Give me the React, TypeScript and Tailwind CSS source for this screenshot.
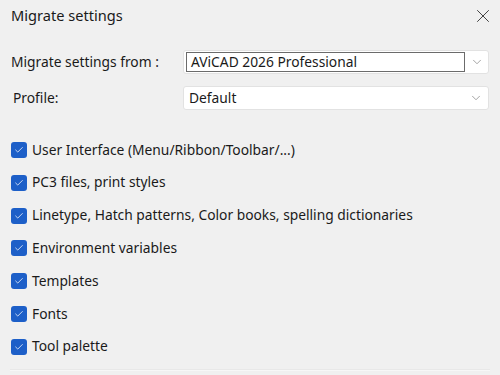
import { X, ChevronDown, Check } from 'lucide-react';

const items = [
  'User Interface (Menu/Ribbon/Toolbar/...)',
  'PC3 files, print styles',
  'Linetype, Hatch patterns, Color books, spelling dictionaries',
  'Environment variables',
  'Templates',
  'Fonts',
  'Tool palette',
];

export default function App() {
  return (
    <div
      className="w-[500px] h-[375px] overflow-hidden bg-[#f0f0f0] text-[#1a1a1a] flex flex-col"
      style={{ fontFamily: '"Noto Sans", "Open Sans", sans-serif' }}
    >
      {/* Title bar */}
      <div className="h-[31px] flex items-center justify-between pl-[11px] pr-[6px]">
        <span className="text-[14.6px] leading-none">Migrate settings</span>
        <X className="w-[22px] h-[22px] text-[#333]" strokeWidth={1} />
      </div>

      {/* Combos */}
      <div className="mt-[19px] flex items-center h-[24px]">
        <span className="w-[183px] pl-[11px] text-[13.8px]">Migrate settings from :</span>
        <div className="w-[306px] h-[24px] bg-white border border-[#e2e2e2] rounded-[3px] flex items-center pl-[2px]">
          <div className="w-[279px] h-[20px] border border-[#6b6b6b] flex items-center pl-[4px] text-[13.8px]">
            AViCAD 2026 Professional
          </div>
          <div className="flex-1 flex justify-center">
            <ChevronDown className="w-[14px] h-[14px] text-[#888]" strokeWidth={1.3} />
          </div>
        </div>
      </div>
      <div className="mt-[12px] flex items-center h-[24px]">
        <span className="w-[183px] pl-[13px] text-[13.8px]">Profile:</span>
        <div className="w-[306px] h-[24px] bg-white border border-[#e2e2e2] rounded-[3px] flex items-center justify-between pl-[5px] pr-[5px] text-[13.8px]">
          <span>Default</span>
          <ChevronDown className="w-[14px] h-[14px] text-[#888]" strokeWidth={1.3} />
        </div>
      </div>

      {/* Checkboxes */}
      <div className="mt-[30px] flex flex-col gap-[12.8px] pl-[11px]">
        {items.map((label) => (
          <div key={label} className="flex items-center h-[20px] gap-[5px]">
            <div className="w-[16px] h-[16px] rounded-[3px] bg-[#1d5fc8] flex items-center justify-center">
              <Check className="w-[10px] h-[10px] text-white" strokeWidth={1.8} />
            </div>
            <span className="text-[13.8px]">{label}</span>
          </div>
        ))}
      </div>

      <div className="mt-auto mb-[4px] mx-[10px] h-[2px] bg-[#f7f7f7] border-t border-[#e8e8e8]" />
    </div>
  );
}
